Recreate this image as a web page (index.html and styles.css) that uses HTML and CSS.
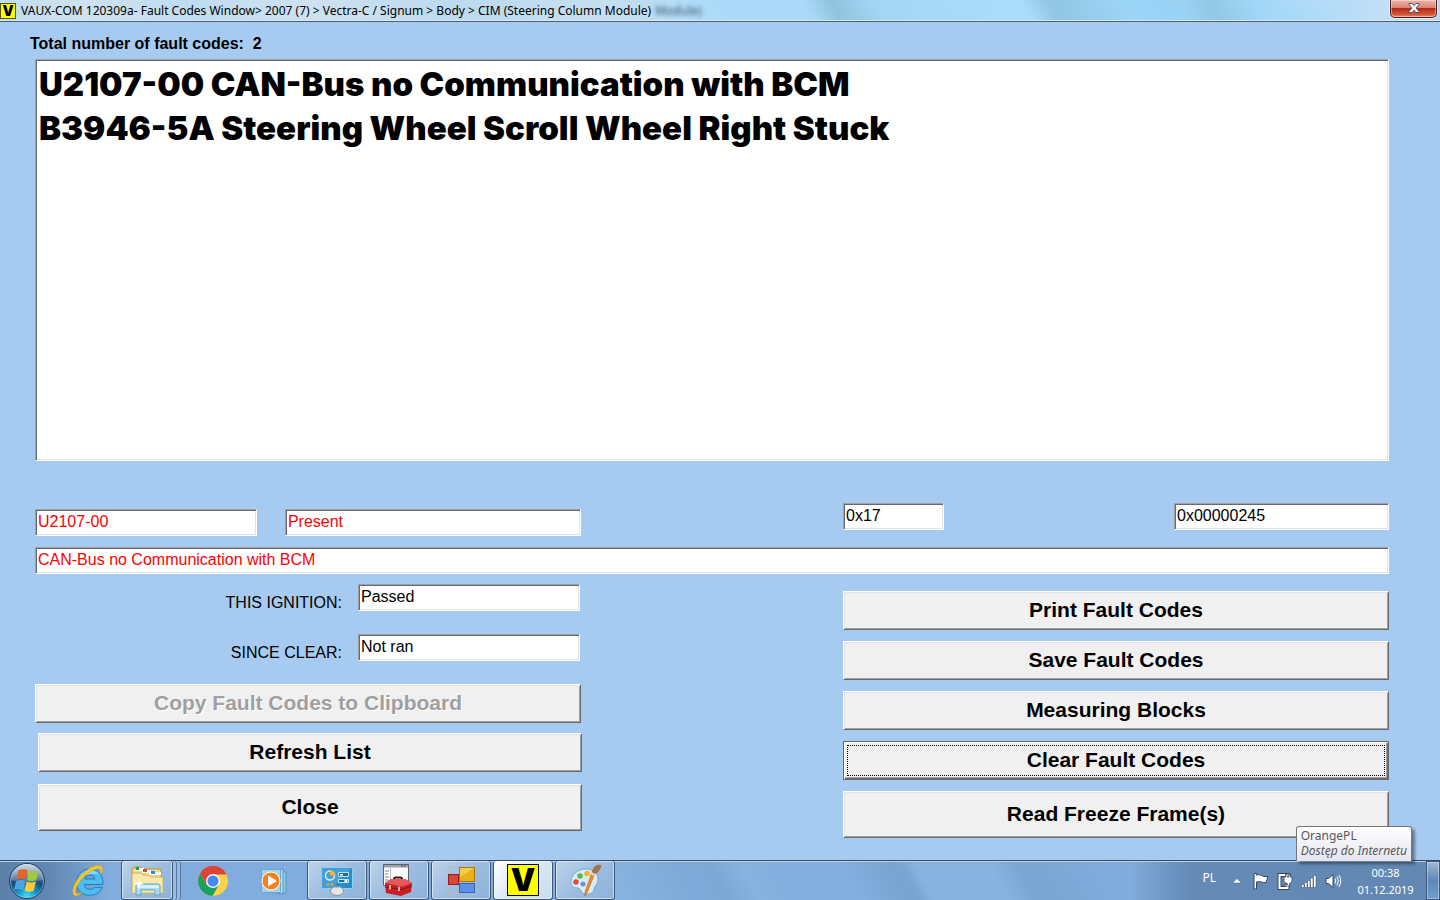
FILE: index.html
```html
<!DOCTYPE html>
<html lang="en">
<head>
    <meta charset="UTF-8">
    <meta name="viewport" content="width=device-width, initial-scale=1.0">
    <title>VAUX-COM 120309a - Fault Codes Window</title>
    <link rel="stylesheet" href="styles.css">
</head>
<body>

<header class="titlebar">
    <svg class="app-icon" width="16" height="16" viewBox="0 0 16 16" aria-hidden="true">
        <rect x="0.5" y="0.5" width="15" height="15" fill="#ffff00" stroke="#55550a"/>
        <text x="8" y="13" text-anchor="middle" class="v-mark" font-size="14">V</text>
    </svg>
    <h1>VAUX-COM 120309a- Fault Codes Window&gt; 2007 (7) &gt; Vectra-C / Signum &gt; Body &gt; CIM (Steering Column Module)</h1>
    <span class="ghost" aria-hidden="true">Module)</span>
    <button class="close-window" aria-label="Close window">
        <svg width="12" height="10" viewBox="0 0 12 10" aria-hidden="true">
            <path d="M1 0.5h3.2L6 2.7 7.8 0.5H11v1L8.2 5 11 8.5v1H7.8L6 7.3 4.2 9.5H1v-1L3.8 5 1 1.5z" fill="#f8f8f8" stroke="#4e5470" stroke-width="1"/>
        </svg>
    </button>
</header>

<main>
    <p class="total">Total number of fault codes:&nbsp; 2</p>

    <div class="panel">
        <select class="fault-list" size="4" aria-label="Fault codes">
            <option>U2107-00 CAN-Bus no Communication with BCM</option>
            <option>B3946-5A Steering Wheel Scroll Wheel Right Stuck</option>
        </select>

        <div class="columns details">
            <div class="code-status">
                <input class="alert code" type="text" value="U2107-00" aria-label="Fault code" readonly>
                <input class="alert status" type="text" value="Present" aria-label="Fault status" readonly>
            </div>
            <div class="raw-values">
                <input class="raw-short" type="text" value="0x17" aria-label="Status byte" readonly>
                <input class="raw-long" type="text" value="0x00000245" aria-label="Raw value" readonly>
            </div>
        </div>

        <input class="alert description" type="text" value="CAN-Bus no Communication with BCM" aria-label="Description" readonly>

        <div class="columns">
            <div class="left">
                <div class="field">
                    <label for="ignition">THIS IGNITION:</label>
                    <input type="text" id="ignition" value="Passed" readonly>
                </div>
                <div class="field">
                    <label for="since">SINCE CLEAR:</label>
                    <input type="text" id="since" value="Not ran" readonly>
                </div>
                <button class="action" disabled>Copy Fault Codes to Clipboard</button>
                <div class="list-actions">
                    <button class="action">Refresh List</button>
                    <button class="action tall">Close</button>
                </div>
            </div>
            <div class="right">
                <button class="action">Print Fault Codes</button>
                <button class="action">Save Fault Codes</button>
                <button class="action">Measuring Blocks</button>
                <button class="action default">Clear Fault Codes</button>
                <button class="action tall">Read Freeze Frame(s)</button>
            </div>
        </div>
    </div>
</main>

<footer class="taskbar">
    <button class="start" aria-label="Start">
        <svg width="38" height="38" viewBox="0 0 38 38">
            <defs>
                <radialGradient id="orb" cx="50%" cy="95%" r="90%">
                    <stop offset="0" stop-color="#3fe0ff"/>
                    <stop offset="0.3" stop-color="#1596c9"/>
                    <stop offset="0.6" stop-color="#164a78"/>
                    <stop offset="1" stop-color="#6f8da8"/>
                </radialGradient>
                <linearGradient id="shine" x1="0" y1="0" x2="0" y2="1">
                    <stop offset="0" stop-color="#fff" stop-opacity="0.65"/>
                    <stop offset="1" stop-color="#fff" stop-opacity="0.15"/>
                </linearGradient>
            </defs>
            <circle cx="19" cy="19" r="17.5" fill="url(#orb)" stroke="#1d3f63"/>
            <circle cx="19" cy="19" r="16.5" fill="none" stroke="#9fd0ea" stroke-opacity="0.6"/>
            <path d="M3 18a16 16 0 0 1 32 0q-16 5-32 0z" fill="url(#shine)"/>
            <path d="M10.500 8.500q4.500-2.500 9-.3L17.600 17.600q-4.500-2.200-9.200.2z" fill="#e8602c"/>
            <path d="M20.800 8.800q4.500 2.200 9.700-.3L28.300 18q-5 2.200-9.300 0z" fill="#9ccb3c"/>
            <path d="M8 19.200q4.700-2.300 9.200-.2L15.200 28q-4.500-2.200-9 .3z" fill="#4fa3e3"/>
            <path d="M18.600 19.500q4.500 2.200 9.300 0L25.700 28.800q-4.500 2.200-9.200 0z" fill="#ffc935"/>
        </svg>
    </button>

    <nav class="apps">
        <button class="app" aria-label="Internet Explorer">
            <svg width="34" height="34" viewBox="0 0 34 34">
                <path d="M31 20.500H12.500q.5 4.800 5.500 4.800 3.300 0 4.800-2h7.500q-3.300 8-12 8C9.500 31.300 4.500 26 4.500 18.500 4.500 10.500 10 5 18 5s13.500 6 13 15.500zM23 15q-.6-4-5-4-4.600 0-5.400 4z" fill="#4fbcf0" stroke="#1f7ec2" stroke-width="1"/>
                <path d="M6.500 16Q8.500 7 18 6.500q6 0 9 4-11-3-20.500 5.500z" fill="#c9efff" opacity="0.5"/>
                <path d="M28.500 9.500c1.500-4-.5-6-5.500-4C14 8 4 20 3.500 27.500c0 3.500 4 2.500 7.500 0-3.500 4.500-9 6-10 1.500C-.5 20 12 5 23 2c7-2 9 2 7 7.500z" fill="#f7c928" stroke="#d29a12" stroke-width="0.5"/>
            </svg>
        </button>
        <div class="stack">
            <button class="app open" aria-label="Windows Explorer">
                <svg width="34" height="34" viewBox="0 0 34 34">
                    <path d="M2 29V6l2-2h7l2 2h18v23z" fill="#f1d98a" stroke="#b89238"/>
                    <path d="M5 5h9v3H5z" fill="#fff"/><path d="M5.500 4h3.500v3H5.500z" fill="#22a43a"/>
                    <path d="M12 7h9v3h-9z" fill="#fff"/><path d="M13 6h4v3h-4z" fill="#d84a35"/>
                    <path d="M19 9h12v3H19z" fill="#fff"/><path d="M21 8h4v3h-4z" fill="#2b8fe0"/>
                    <path d="M2 10h9l2 2h6l2 2h12v16H2z" fill="#fae9a8" stroke="#d3b25c"/>
                    <path d="M6 32V23q0-2 2-2h20q2 0 2 2v9h-5v-5H11v5z" fill="#a9dcf4" stroke="#5ea5cf"/>
                    <path d="M7 22h22v3H7z" fill="#d8f2fd"/>
                    <path d="M9 14l1 5 4 2-4 1-1 5-1-5-4-1 4-2z" fill="#fff"/>
                </svg>
            </button>
            <span class="edge"></span>
            <span class="edge"></span>
        </div>
        <button class="app" aria-label="Google Chrome">
            <svg width="30" height="30" viewBox="0 0 30 30">
                <circle cx="15" cy="15" r="15" fill="#ffd24b"/>
                <path d="M2 7.500A15 15 0 0 1 28 7.500H15z" fill="#dc4437"/>
                <path d="M28 7.500a15 15 0 0 1 1 1H15v6L8.500 18.800 2 7.500A15 15 0 0 1 28 7.500z" fill="#dc4437"/>
                <path d="M2 7.500A15 15 0 0 0 14.500 30l6.700-11.500L15 22l-6.500-3.300z" fill="#1aa160"/>
                <circle cx="15" cy="15" r="7" fill="#f3f3f3"/>
                <circle cx="15" cy="15" r="5.500" fill="#4688f1"/>
            </svg>
        </button>
        <button class="app" aria-label="Windows Media Player">
            <svg width="30" height="30" viewBox="0 0 30 30">
                <path d="M19 5l7 1v21l-7 1z" fill="#8fc9e6" stroke="#5197c0"/>
                <path d="M16 4l7-1v25l-7-1z" fill="#b6dff2" stroke="#5197c0"/>
                <path d="M1.500 3.500h19v23h-19z" fill="#a8d4ea" stroke="#6ba9ca"/>
                <circle cx="11" cy="15" r="9" fill="#f5811f" stroke="#fff" stroke-width="1"/>
                <path d="M8 9.500l9 5.500-9 5.500z" fill="#fff"/>
            </svg>
        </button>
        <button class="app open" aria-label="Control Panel">
            <svg width="34" height="34" viewBox="0 0 34 34">
                <rect x="1.500" y="4.500" width="31" height="21" rx="1" fill="#2b8bc9" stroke="#8ed0f2"/>
                <path d="M2 5h30L12 25H2z" fill="#5cb4e4" opacity="0.5"/>
                <circle cx="10" cy="12.500" r="4.500" fill="none" stroke="#d5efff" stroke-width="1.500"/>
                <path d="M10 12.500V7a5.500 5.500 0 0 1 5 5.500z" fill="#f9b233"/>
                <path d="M18.500 9.500h10v4h-10zM18.500 16.500h10v3h-10z" fill="#1c6ba6" stroke="#b9e3fa"/>
                <path d="M20 11h3v1.500h-3zM24.500 17h3v2h-3z" fill="#fff"/>
                <circle cx="8" cy="21.500" r="1.300" fill="#f9a233"/><circle cx="12" cy="21.500" r="1.300" fill="#f9a233"/>
                <ellipse cx="17" cy="28" rx="6.500" ry="4.500" fill="#e3e5e8" stroke="#8b929b"/>
                <path d="M14 23.500q3 2 6 0" fill="none" stroke="#aaa"/>
            </svg>
        </button>
        <button class="app open" aria-label="Toolbox">
            <svg width="34" height="34" viewBox="0 0 34 34">
                <path d="M1.500 1.500h25v21h-25z" fill="#fafafa" stroke="#5b6270"/>
                <path d="M2 2h24v2.500H2z" fill="#9aa0ad"/>
                <path d="M19 3h1.500M22 3h1.500" stroke="#333"/>
                <path d="M8.500 5v17" stroke="#b8bcc4"/>
                <path d="M3 8h4M3 11h3M3 14h4M3 17h3" stroke="#7d8594"/>
                <path d="M12 18v-2q0-1.500 2-1.500h4q2 0 2 1.500v2" fill="none" stroke="#3f1414" stroke-width="2"/>
                <path d="M3 20l6-4h14l7 4-1 9-10 4-15-3z" fill="#c81f25"/>
                <path d="M3 20l6-4h14l7 4-10 3.500z" fill="#e8575b"/>
                <path d="M3 24l17 2.500 10-3.500" fill="none" stroke="#861014"/>
                <path d="M8 22v4.500M17 23.500V28" stroke="#ddd" stroke-width="1.500"/>
            </svg>
        </button>
        <button class="app open" aria-label="Application">
            <svg width="30" height="30" viewBox="0 0 30 30">
                <path d="M2 2h26v26H2zM13.500 2v26M2 18.500h26M7.500 18.500V28M2 10h11" fill="none" stroke="#c0b9bb"/>
                <rect x="2.500" y="9.500" width="10" height="10" fill="#d8473c" stroke="#9c1c18"/>
                <rect x="13.500" y="2.500" width="15" height="14" fill="#e8b01c" stroke="#a87609"/>
                <path d="M14 3h14L14 12z" fill="#f8d766" opacity="0.7"/>
                <rect x="13.500" y="18.500" width="15" height="9" fill="#5b8fe8" stroke="#3563b0"/>
            </svg>
        </button>
        <button class="app open active" aria-label="VAUX-COM">
            <svg width="32" height="32" viewBox="0 0 32 32">
                <rect x="0.500" y="0.500" width="31" height="31" fill="#ffff00" stroke="#000"/>
                <text x="16" y="27" text-anchor="middle" class="v-mark" font-size="31">V</text>
            </svg>
        </button>
        <button class="app open" aria-label="Paint">
            <svg width="34" height="34" viewBox="0 0 34 34">
                <path d="M3 20C2 12 10 6 18 6c7 0 12 4 12 10s-4 7-4 10-4 6-9 5-3-5-7-6-6 0-7-5z" fill="#d9edf8" stroke="#7ca9c9"/>
                <circle cx="8" cy="19" r="2.800" fill="#e04c40"/>
                <circle cx="12" cy="13" r="2.800" fill="#55b84c"/>
                <circle cx="19" cy="10.500" r="2.800" fill="#f5b32c"/>
                <circle cx="15" cy="21" r="2.500" fill="#5c9bcd"/>
                <path d="M27 10l-8 20-2 3v-4l7-20z" fill="#f08a2c" stroke="#b75d14" stroke-width="0.500"/>
                <path d="M23.500 9l2-4q3-4 8-3-1 6-6 9z" fill="#a5714c"/>
                <path d="M23 9l4.500 2-1 2-4-2z" fill="#dadada"/>
            </svg>
        </button>
    </nav>

    <div class="tray">
        <span class="lang">PL</span>
        <button class="tray-icon" aria-label="Show hidden icons">
            <svg width="18" height="18" viewBox="0 0 18 18"><path d="M4.500 11L9 6.500l4.500 4.500z" fill="#fff" stroke="#3c5878" stroke-width="0.500"/></svg>
        </button>
        <button class="tray-icon" aria-label="Action Center">
            <svg width="18" height="18" viewBox="0 0 18 18">
                <path d="M2 1.500h2.500v1.500q3-1 5 .5t6.500 1l-2 6q-3 .5-4.500-.5t-5 0V17H2z" fill="#fff" stroke="#33475e"/>
            </svg>
        </button>
        <button class="tray-icon" aria-label="Power">
            <svg width="18" height="18" viewBox="0 0 18 18">
                <rect x="3.500" y="3" width="8" height="13" fill="none" stroke="#33475e" stroke-width="4"/>
                <rect x="3.500" y="3" width="8" height="13" fill="none" stroke="#fff" stroke-width="2"/>
                <path d="M8 5h1.500V2H11v3h2V2h1.500v3H16v4q0 2-2.500 2.500V14H8v-1.500h3.500v-1Q8 11 8 9z" fill="#fff" stroke="#33475e" stroke-width="0.800"/>
            </svg>
        </button>
        <button class="tray-icon" aria-label="Network">
            <svg width="18" height="18" viewBox="0 0 18 18">
                <path d="M1.500 12.500h2.500v3H1.500zM4.500 10.500H7v5H4.500zM7.500 8.500H10v7H7.500zM10.500 6H13v9.500h-2.500zM13.500 3.500H16v12h-2.500z" fill="#fff" stroke="#33475e" stroke-width="0.500"/>
            </svg>
        </button>
        <button class="tray-icon" aria-label="Volume">
            <svg width="18" height="18" viewBox="0 0 18 18">
                <path d="M2 6.500h2.500L9 2.500v13l-4.500-4H2z" fill="#fff" stroke="#33475e"/>
                <path d="M11 6.500q1.500 2.500 0 5M13 4.500q2.800 4.500 0 9M15 3q3.500 6 0 12" fill="none" stroke="#fff" stroke-width="1"/>
            </svg>
        </button>
        <div class="clock">
            <span>00:38</span>
            <span>01.12.2019</span>
        </div>
        <button class="show-desktop" aria-label="Show desktop"></button>
        <div class="tooltip" role="tooltip">
            <span>OrangePL</span>
            <em>Dostęp do Internetu</em>
        </div>
    </div>
</footer>

</body>
</html>
```
FILE: styles.css
```css
* {
    box-sizing: border-box;
}
body {
    margin: 0;
    min-height: 100vh;
    display: flex;
    flex-direction: column;
    background: #a6caf0;
    color: #000;
    font-family: "Liberation Sans", Arial, sans-serif;
    font-size: 16px;
}
button, input, select {
    font: inherit;
    color: inherit;
    margin: 0;
    border-radius: 0;
}
svg {
    overflow: visible;
}
.v-mark {
    font-family: Inter, sans-serif;
    font-weight: 900;
}

/* title bar */
.titlebar {
    height: 22px;
    display: flex;
    align-items: center;
    padding-right: 3px;
    border-bottom: 1px solid #4d5d6e;
    box-shadow: inset 0 -1px #d8ecfa;
    background: linear-gradient(62deg, #bcdcf0 0%, #cfe2ef 6%, #bfdcf0 14%, #cfe2f0 22%, #bcdaee 32%, #c5dff0 42%, #abdaf9 50%, #abdaf9 56%, #8fc3de 58%, #a4d6f4 61%, #abdcfc 71%, #90c6e2 73%, #9dd5f8 78%, #9ad2f5 82%, #92c8e4 84%, #a0d7f8 87%, #c3dff7 96%, #b9d4ee 100%);
    font-family: "Noto Sans", "Segoe UI", sans-serif;
    font-size: 12px;
}
.app-icon {
    flex: none;
}
.titlebar h1 {
    margin: 0 0 0 5px;
    font-size: inherit;
    font-weight: normal;
    white-space: nowrap;
}
.ghost {
    margin-left: 4px;
    color: transparent;
    text-shadow: 0 0 4px #35536b;
}
.close-window {
    align-self: flex-start;
    margin-left: auto;
    width: 47px;
    height: 18px;
    padding: 0 0 2px;
    display: flex;
    align-items: center;
    justify-content: center;
    border: 1px solid #4c1b1c;
    border-top: 0;
    border-radius: 0 0 5px 5px;
    background: linear-gradient(#eeb5ab, #d98475 45%, #b5291b 50%, #d4583a 85%, #e88a66);
    box-shadow: inset 0 0 0 1px rgba(255, 255, 255, 0.4), 0 0 0 1px rgba(255, 255, 255, 0.5);
}

/* fault code window */
main {
    flex: 1;
    display: flex;
    flex-direction: column;
    padding: 12px 51px 22px 30px;
}
.total {
    margin: 0 0 5px;
    line-height: 20px;
    font-weight: bold;
}
.panel {
    flex: 1;
    display: flex;
    flex-direction: column;
    padding-left: 5px;
}
.fault-list, input {
    border: 1px solid;
    border-color: #a0a0a0 #fff #fff #a0a0a0;
    background: #fff;
    box-shadow: inset 1px 1px #696969, inset -1px -1px #e3e3e3;
    outline: none;
}
.fault-list {
    flex: 1;
    min-height: 120px;
    padding: 4px 1px;
    overflow: hidden;
    font-family: Inter, "Arial Black", sans-serif;
    font-size: 33px;
}
.fault-list option {
    padding: 0 2px;
    min-height: 44px;
    line-height: 44px;
    font-weight: 900;
}
input {
    min-width: 0;
    height: 27px;
    padding: 0 2px 2px;
}
.alert {
    color: #f00;
}
.columns {
    display: grid;
    grid-template-columns: 1fr 1fr;
    column-gap: 262px;
}
.details {
    margin: 42px 0 11px;
}
.code-status, .raw-values {
    display: flex;
    justify-content: space-between;
}
.code-status {
    padding-top: 6px;
    gap: 28px;
}
.code {
    flex: 221;
}
.status {
    flex: 297;
}
.raw-short {
    width: 101px;
}
.raw-long {
    width: 215px;
}
.description {
    margin-bottom: 10px;
}
.left, .right, .list-actions {
    display: flex;
    flex-direction: column;
}
.right {
    padding-top: 7px;
    gap: 11px;
}
.field {
    display: flex;
    justify-content: flex-end;
    align-items: flex-end;
    gap: 16px;
    margin: 0 1px 23px 0;
}
.field label {
    line-height: 16px;
}
.field input {
    width: 222px;
}
.list-actions {
    margin: 10px -1px 0 3px;
    gap: 12px;
}
.action {
    height: 39px;
    padding: 0 0 2px;
    border: 1px solid;
    border-color: #fff #696969 #696969 #fff;
    background: #f0f0f0;
    box-shadow: inset 1px 1px #e3e3e3, inset -1px -1px #a0a0a0;
    font-size: 21px;
    font-weight: bold;
}
.action.tall {
    height: 47px;
}
.action:disabled {
    color: #a0a0a0;
    text-shadow: 1px 1px #fff;
}
.action.default {
    border-color: #696969;
    box-shadow: inset 1px 1px #fff, inset -1px -1px #696969, inset -2px -2px #a0a0a0;
    outline: 1px dotted #000;
    outline-offset: -5px;
}

/* taskbar */
.taskbar {
    height: 40px;
    display: flex;
    border-top: 1px solid #3a4a60;
    box-shadow: inset 0 1px #b9d3ec;
    background:
        linear-gradient(90deg, rgba(66, 98, 135, 0.6) 0, rgba(66, 98, 135, 0.5) 50px, transparent 110px),
        linear-gradient(270deg, rgba(82, 116, 156, 0.65) 0, rgba(82, 116, 156, 0.6) 250px, transparent 310px),
        linear-gradient(62deg, #82aedf 0%, #80abdc 35%, #88b3de 43%, #7ea8d8 48%, #7ca8d6 50%, #87b3df 52%, #82aee0 55%, #82aee0 59%, #79a5d2 62%, #79a5d0 63%, #88b3e0 64%, #88b3e0 69%, #79a5d2 71%, #80abdc 77%, #80abdc 100%);
}
.taskbar button {
    flex: none;
    padding: 0;
    border: 0;
    background: none;
    display: flex;
    align-items: center;
    justify-content: center;
}
.taskbar .start {
    width: 54px;
}
.apps {
    display: flex;
    gap: 2px;
    margin-left: 5px;
}
.taskbar .app {
    width: 60px;
}
.taskbar .open {
    border: 1px solid #3d5878;
    border-top: 0;
    border-radius: 3px;
    background: linear-gradient(135deg, #bdd3eb, #9cbde0 50%, #8db2da);
    box-shadow: inset 0 0 0 1px rgba(255, 255, 255, 0.5);
}
.taskbar .active {
    background: linear-gradient(135deg, #fff, #dbe7f4 50%, #c9dbef);
}
.stack {
    display: flex;
    width: 60px;
}
.taskbar .stack .app {
    width: 52px;
}
.edge {
    width: 4px;
    border-right: 1px solid #54779f;
    background: #9cbadc;
    border-radius: 0 3px 3px 0;
}
.tray {
    position: relative;
    display: flex;
    align-items: center;
    margin-left: auto;
    color: #fff;
    font-family: "Noto Sans", "Segoe UI", sans-serif;
    font-size: 12px;
}
.lang {
    margin-right: 9px;
    padding-bottom: 6px;
}
.taskbar .tray-icon {
    width: 24px;
}
.clock {
    width: 81px;
    font-size: 11px;
    line-height: 17px;
    text-align: center;
}
.clock span {
    display: block;
}
.taskbar .show-desktop {
    align-self: stretch;
    width: 14px;
    border: 1px solid #3f5a7b;
    background: linear-gradient(#9db8d5, #5f87b5 50%, #6f9fd0);
    box-shadow: inset 0 0 0 1px rgba(255, 255, 255, 0.35);
}
.tooltip {
    position: absolute;
    right: 28px;
    bottom: 100%;
    height: 35px;
    padding: 1px 4px 0;
    border: 1px solid #767676;
    border-bottom: 0;
    border-radius: 3px 3px 0 0;
    background: linear-gradient(#fff, #e4e5f0);
    box-shadow: 3px 3px 3px rgba(0, 0, 0, 0.4);
    color: #575757;
    line-height: 15px;
    white-space: nowrap;
}
.tooltip span, .tooltip em {
    display: block;
}
```
